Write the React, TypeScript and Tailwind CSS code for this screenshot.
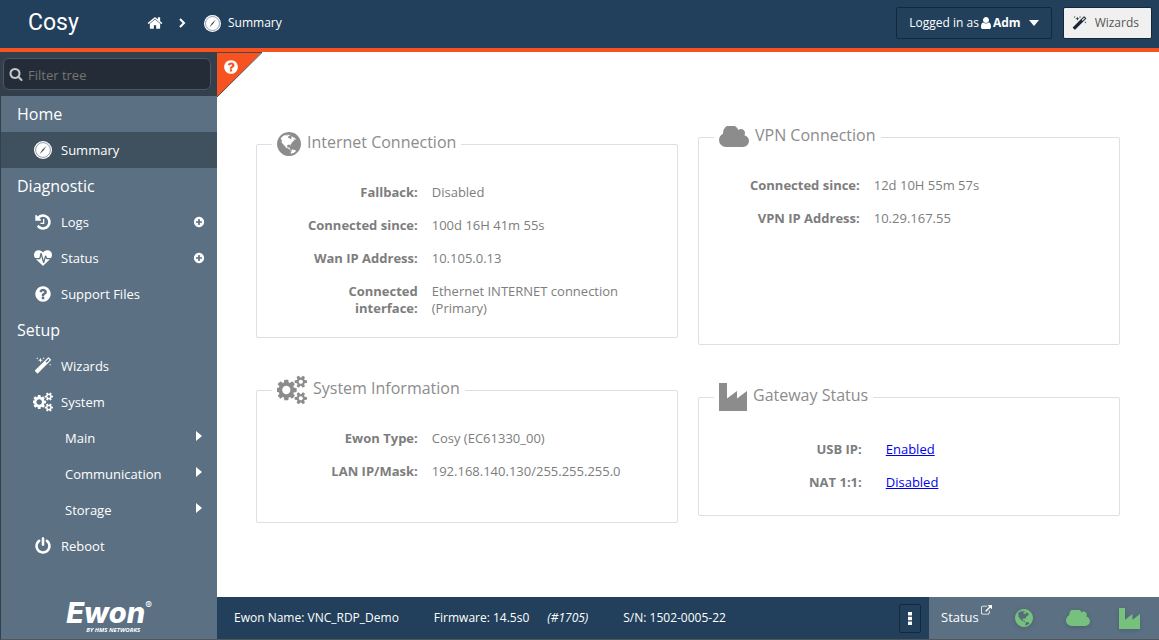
import type { ReactNode } from 'react';

type IconProps = { className?: string };

const paths = {
  home: 'M1472 992v480q0 26-19 45t-45 19h-384v-384h-256v384h-384q-26 0-45-19t-19-45v-480q0-1 .5-3t.5-3l575-474 575 474q1 2 1 6zm223-69l-62 74q-8 9-21 11h-3q-13 0-21-7l-692-577-692 577q-12 8-24 7-13-2-21-11l-62-74q-8-10-7-23.5t11-21.5l719-599q32-26 76-26t76 26l244 204v-195q0-14 9-23t23-9h192q14 0 23 9t9 23v408l219 182q10 8 11 21.5t-7 23.5z',
  search:
    'M1216 832q0-185-131.5-316.5t-316.5-131.5-316.5 131.5-131.5 316.5 131.5 316.5 316.5 131.5 316.5-131.5 131.5-316.5zm512 832q0 52-38 90t-90 38q-54 0-90-38l-343-342q-179 124-399 124-143 0-273.5-55.5t-225-150-150-225-55.5-273.5 55.5-273.5 150-225 225-150 273.5-55.5 273.5 55.5 225 150 150 225 55.5 273.5q0 220-124 399l343 343q37 37 37 90z',
  help: 'M1024 1376v-192q0-14-9-23t-23-9h-192q-14 0-23 9t-9 23v192q0 14 9 23t23 9h192q14 0 23-9t9-23zm256-672q0-88-55.5-163t-138.5-116-170-41q-243 0-371 213-15 24 8 42l132 100q7 6 19 6 16 0 25-12 53-68 86-92 34-24 86-24 48 0 85.5 26t37.5 59q0 38-20 61t-68 45q-63 28-115.5 86.5t-52.5 125.5v36q0 14 9 23t23 9h192q14 0 23-9t9-23q0-19 21.5-49.5t54.5-49.5q32-18 49-28.5t46-35 44.5-48 28-60.5 12.5-81zm384 192q0 209-103 385.5t-279.5 279.5-385.5 103-385.5-103-279.5-279.5-103-385.5 103-385.5 279.5-279.5 385.5-103 385.5 103 279.5 279.5 103 385.5z',
  history:
    'M1664 896q0 156-61 298t-164 245-245 164-298 61q-172 0-327-72.5t-264-204.5q-7-10-6.5-22.5t8.5-20.5l137-138q10-9 25-9 16 2 23 12 73 95 179 147t225 52q104 0 198.5-40.5t163.5-109.5 109.5-163.5 40.5-198.5-40.5-198.5-109.5-163.5-163.5-109.5-198.5-40.5q-98 0-188 35.5t-160 101.5l137 138q31 30 14 69-17 40-59 40h-448q-26 0-45-19t-19-45v-448q0-42 40-59 39-17 69 14l130 129q107-101 244.5-156.5t284.5-55.5q156 0 298 61t245 164 164 245 61 298zm-640-288v448q0 14-9 23t-23 9h-320q-14 0-23-9t-9-23v-64q0-14 9-23t23-9h224v-352q0-14 9-23t23-9h64q14 0 23 9t9 23z',
  heartbeat:
    'M1280 1024h305q-5 6-10 10.5t-9 7.5l-3 4-623 600q-18 18-44 18t-44-18l-624-602q-5-2-21-20h369q22 0 39.5-13.5t22.5-34.5l70-281 190 667q6 20 23 33t39 13q21 0 38-13t23-33l146-485 56 112q18 35 57 35zm512-428q0 145-103 300h-369l-111-221q-8-17-25.5-27t-36.5-8q-45 5-56 46l-129 430-196-686q-6-20-23.5-33t-39.5-13-39 13.5-22 34.5l-116 464h-423q-103-155-103-300 0-220 127-344t351-124q62 0 126.5 21.5t120 58 95.5 68.5 76 68q36-36 76-68t95.5-68.5 120-58 126.5-21.5q224 0 351 124t127 344z',
  magic:
    'M1254 581l293-293-107-107-293 293zm447-293q0 27-18 45l-1286 1286q-18 18-45 18t-45-18l-198-198q-18-18-18-45t18-45l1286-1286q18-18 45-18t45 18l198 198q18 18 18 45zm-1351-190l98 30-98 30-30 98-30-98-98-30 98-30 30-98zm350 162l196 60-196 60-60 196-60-196-196-60 196-60 60-196zm930 478l98 30-98 30-30 98-30-98-98-30 98-30 30-98zm-640-640l98 30-98 30-30 98-30-98-98-30 98-30 30-98z',
  power:
    'M1664 896q0 156-61 298t-164 245-245 164-298 61-298-61-245-164-164-245-61-298q0-182 80.5-343t226.5-270q43-32 95.5-25t83.5 50q32 42 24.5 94.5t-49.5 84.5q-98 74-151.5 181t-53.5 228q0 104 40.5 198.5t109.5 163.5 163.5 109.5 198.5 40.5 198.5-40.5 163.5-109.5 109.5-163.5 40.5-198.5q0-121-53.5-228t-151.5-181q-42-32-49.5-84.5t24.5-94.5q31-43 84-50t95 25q146 109 226.5 270t80.5 343zm-640-768v640q0 52-38 90t-90 38-90-38-38-90v-640q0-52 38-90t90-38 90 38 38 90z',
  user: 'M1536 1399q0 109-62.5 187t-150.5 78h-854q-88 0-150.5-78t-62.5-187q0-85 8.5-160.5t31.5-152 58.5-131 94-89 134.5-34.5q131 128 313 128t313-128q76 0 134.5 34.5t94 89 58.5 131 31.5 152 8.5 160.5zm-256-887q0 159-112.5 271.5t-271.5 112.5-271.5-112.5-112.5-271.5 112.5-271.5 271.5-112.5 271.5 112.5 112.5 271.5z',
  plus: 'M1344 960v-128q0-26-19-45t-45-19h-256v-256q0-26-19-45t-45-19h-128q-26 0-45 19t-19 45v256h-256q-26 0-45 19t-19 45v128q0 26 19 45t45 19h256v256q0 26 19 45t45 19h128q26 0 45-19t19-45v-256h256q26 0 45-19t19-45zm320-64q0 209-103 385.5t-279.5 279.5-385.5 103-385.5-103-279.5-279.5-103-385.5 103-385.5 279.5-279.5 385.5-103 385.5 103 279.5 279.5 103 385.5z',
  external:
    'M1408 928v320q0 119-84.5 203.5t-203.5 84.5h-832q-119 0-203.5-84.5t-84.5-203.5v-832q0-119 84.5-203.5t203.5-84.5h704q14 0 23 9t9 23v64q0 14-9 23t-23 9h-704q-66 0-113 47t-47 113v832q0 66 47 113t113 47h832q66 0 113-47t47-113v-320q0-14 9-23t23-9h64q14 0 23 9t9 23zm384-864v512q0 26-19 45t-45 19-45-19l-176-176-652 652q-10 10-23 10t-23-10l-114-114q-10-10-10-23t10-23l652-652-176-176q-19-19-19-45t19-45 45-19h512q26 0 45 19t19 45z',
  cogs: 'M832 896q0-106-75-181t-181-75-181 75-75 181 75 181 181 75 181-75 75-181zm768 512q0-52-38-90t-90-38-90 38-38 90q0 53 37.5 90.5t90.5 37.5 90.5-37.5 37.5-90.5zm0-1024q0-52-38-90t-90-38-90 38-38 90q0 53 37.5 90.5t90.5 37.5 90.5-37.5 37.5-90.5zm-384 421v185q0 10-7 19.5t-16 10.5l-155 24q-11 35-32 76 34 48 90 115 7 11 7 20 0 12-7 19-23 30-82.5 89.5t-78.5 59.5q-11 0-21-7l-115-90q-37 19-77 31-11 108-23 155-7 24-30 24h-186q-11 0-20-7.5t-10-17.5l-23-153q-34-10-75-31l-118 89q-7 7-20 7-11 0-21-8-144-133-144-160 0-9 7-19 10-14 41-53t47-61q-23-44-35-82l-152-24q-10-1-17-9.5t-7-19.5v-185q0-10 7-19.5t16-10.5l155-24q11-35 32-76-34-48-90-115-7-11-7-20 0-12 7-20 22-30 82-89t79-59q11 0 21 7l115 90q34-18 77-32 11-108 23-154 7-24 30-24h186q11 0 20 7.5t10 17.5l23 153q34 10 75 31l118-89q8-7 20-7 11 0 21 8 144 133 144 160 0 8-7 19-12 16-42 54t-45 60q23 48 34 82l152 23q10 2 17 10.5t7 19.5zm640 533v140q0 16-149 31-12 27-30 52 51 113 51 138 0 4-4 7-122 71-124 71-8 0-46-47t-52-68q-20 2-30 2t-30-2q-14 21-52 68t-46 47q-2 0-124-71-4-3-4-7 0-25 51-138-18-25-30-52-149-15-149-31v-140q0-16 149-31 13-29 30-52-51-113-51-138 0-4 4-7 4-2 35-20t59-34 30-16q8 0 46 46.5t52 67.5q20-2 30-2t30 2q51-71 92-112l6-2q4 0 124 70 4 3 4 7 0 25-51 138 17 23 30 52 149 15 149 31zm0-1024v140q0 16-149 31-12 27-30 52 51 113 51 138 0 4-4 7-122 71-124 71-8 0-46-47t-52-68q-20 2-30 2t-30-2q-14 21-52 68t-46 47q-2 0-124-71-4-3-4-7 0-25 51-138-18-25-30-52-149-15-149-31v-140q0-16 149-31 13-29 30-52-51-113-51-138 0-4 4-7 4-2 35-20t59-34 30-16q8 0 46 46.5t52 67.5q20-2 30-2t30 2q51-71 92-112l6-2q4 0 124 70 4 3 4 7 0 25-51 138 17 23 30 52 149 15 149 31z',
  cloud:
    'M1920 1152q0 159-112.5 271.5t-271.5 112.5h-1088q-185 0-316.5-131.5t-131.5-316.5q0-132 71-241.5t187-163.5q-2-28-2-43 0-212 150-362t362-150q158 0 286.5 88t187.5 230q70-62 166-62 106 0 181 75t75 181q0 75-41 138 129 30 213 134.5t84 239.5z',
  globe:
    'M896 128q209 0 385.5 103t279.5 279.5 103 385.5-103 385.5-279.5 279.5-385.5 103-385.5-103-279.5-279.5-103-385.5 103-385.5 279.5-279.5 385.5-103zm274 521q-2 1-9.5 9.5t-13.5 9.5q2 0 4.5-5t5-11 3.5-7q6-7 22-15 14-6 52-12 34-8 51 11-2-2 9.5-13t14.5-12q3-2 15-4.5t15-7.5l2-22q-12 1-17.5-7t-6.5-21q0 2-6 8 0-7-4.5-8t-11.5 1-9 1q-10-3-15-7.5t-8-16.5-4-15q-2-5-9.5-11t-9.5-10q-1-2-2.5-5.5t-3-6.5-4-5.5-5.5-2.5-7 5-7.5 10-4.5 5q-3-2-6-1.5t-4.5 1-4.5 3-5 3.5q-3 2-8.5 3t-8.5 2q15-5-1-11-10-4-16-3 9-4 7.5-12t-8.5-14h5q-1-4-8.5-8.5t-17.5-8.5-13-6q-8-5-34-9.5t-33-.5q-5 6-4.5 10.5t4 14 3.5 12.5q1 6-5.5 13t-6.5 12q0 7 14 15.5t10 21.5q-3 8-16 16t-16 12q-5 8-1.5 18.5t10.5 16.5q2 2 1.5 4t-3.5 4.5-5.5 4-6.5 3.5l-3 2q-11 5-20.5-6t-13.5-26q-7-25-16-30-23-8-29 1-5-13-41-26-25-9-58-4 6-1 0-15-7-15-19-12 3-6 4-17.5t1-13.5q3-13 12-23 1-1 7-8.5t9.5-13.5.5-6q35 4 50-11 5-5 11.5-17t10.5-17q9-6 14-5.5t14.5 5.5 14.5 5q14 1 15.5-11t-7.5-20q12 1 3-17-4-7-8-9-12-4-27 5-8 4 2 8-1-1-9.5 10.5t-16.5 17.5-16-5q-1-1-5.5-13.5t-9.5-13.5q-8 0-16 15 3-8-11-15t-24-8q19-12-8-27-7-4-20.5-5t-19.5 4q-5 7-5.5 11.5t5 8 10.5 5.5 11.5 4 8.5 3q14 10 8 14-2 1-8.5 3.5t-11.5 4.5-6 4q-3 4 0 14t-2 14q-5-5-9-17.5t-7-16.5q7 9-25 6l-10-1q-4 0-16 2t-20.5 1-13.5-8q-4-8 0-20 1-4 4-2-4-3-11-9.5t-10-8.5q-46 15-94 41 6 1 12-1 5-2 13-6.5t10-5.5q34-14 42-7l5-5q14 16 20 25-7-4-30-1-20 6-22 12 7 12 5 18-4-3-11.5-10t-14.5-11-15-5q-16 0-22 1-146 80-235 222 7 7 12 8 4 1 5 9t2.5 11 11.5-3q9 8 3 19 1-1 44 27 19 17 21 21 3 11-10 18-1-2-9-9t-9-4q-3 5 .5 18.5t10.5 12.5q-7 0-9.5 16t-2.5 35.5-1 23.5l2 1q-3 12 5.5 34.5t21.5 19.5q-13 3 20 43 6 8 8 9 3 2 12 7.5t15 10 10 10.5q4 5 10 22.5t14 23.5q-2 6 9.5 20t10.5 23q-1 0-2.5 1t-2.5 1q3 7 15.5 14t15.5 13q1 3 2 10t3 11 8 2q2-20-24-62-15-25-17-29-3-5-5.5-15.5t-4.5-14.5q2 0 6 1.5t8.5 3.5 7.5 4 2 3q-3 7 2 17.5t12 18.5 17 19 12 13q6 6 14 19.5t0 13.5q9 0 20 10.5t17 19.5q5 8 8 26t5 24q2 7 8.5 13.5t12.5 9.5l16 8 13 7q5 2 18.5 10.5t21.5 11.5q10 4 16 4t14.5-2.5 13.5-3.5q15-2 29 15t21 21q36 19 55 11-2 1 .5 7.5t8 15.5 9 14.5 5.5 8.5q5 6 18 15t18 15q6-4 7-9-3 8 7 20t18 10q14-3 14-32-31 15-49-18 0-1-2.5-5.5t-4-8.5-2.5-8.5 0-7.5 5-3q9 0 10-3.5t-2-12.5-4-13q-1-8-11-20t-12-15q-5 9-16 8t-16-9q0 1-1.5 5.5t-1.5 6.5q-13 0-15-1 1-3 2.5-17.5t3.5-22.5q1-4 5.5-12t7.5-14.5 4-12.5-4.5-9.5-17.5-2.5q-19 1-26 20-1 3-3 10.5t-5 11.5-9 7q-7 3-24 2t-24-5q-13-8-22.5-29t-9.5-37q0-10 2.5-26.5t3-25-5.5-24.5q3-2 9-9.5t10-10.5q2-1 4.5-1.5t4.5 0 4-1.5 3-6q-1-1-4-3-3-3-4-3 7 3 28.5-1.5t27.5 1.5q15 11 22-2 0-1-2.5-9.5t-.5-13.5q5 27 29 9 3 3 15.5 5t17.5 5q3 2 7 5.5t5.5 4.5 5-.5 8.5-6.5q10 14 12 24 11 40 19 44 7 3 11 2t4.5-9.5 0-14-1.5-12.5l-1-8v-18l-1-8q-15-3-18.5-12t1.5-18.5 15-18.5q1-1 8-3.5t15.5-6.5 12.5-8q21-19 15-35 7 0 11-9-1 0-5-3t-7.5-5-4.5-2q9-5 2-16 5-3 7.5-11t7.5-10q9 12 21 2 8-8 1-16 5-7 20.5-10.5t18.5-9.5q7 2 8-2t1-12 3-12q4-5 15-9t13-5l17-11q3-4 0-4 18 2 31-11 10-11-6-20 3-6-3-9.5t-15-5.5q3-1 11.5-.5t10.5-1.5q15-10-7-16-17-5-43 12zm-163 877q206-36 351-189-3-3-12.5-4.5t-12.5-3.5q-18-7-24-8 1-7-2.5-13t-8-9-12.5-8-11-7q-2-2-7-6t-7-5.5-7.5-4.5-8.5-2-10 1l-3 1q-3 1-5.5 2.5t-5.5 3-4 3 0 2.5q-21-17-36-22-5-1-11-5.5t-10.5-7-10-1.5-11.5 7q-5 5-6 15t-2 13q-7-5 0-17.5t2-18.5q-3-6-10.5-4.5t-12 4.5-11.5 8.5-9 6.5-8.5 5.5-8.5 7.5q-3 4-6 12t-5 11q-2-4-11.5-6.5t-9.5-5.5q2 10 4 35t5 38q7 31-12 48-27 25-29 40-4 22 12 26 0 7-8 20.5t-7 21.5q0 6 2 16z',
};

const Icon = ({ name, className, box = '0 0 1792 1792' }: { name: keyof typeof paths; className?: string; box?: string }) => (
  <svg viewBox={box} className={className} fill="currentColor" aria-hidden="true">
    <path d={paths[name]} />
  </svg>
);

const Compass = ({ className }: IconProps) => (
  <svg viewBox="0 0 18 18" className={className} aria-hidden="true">
    <circle cx="9" cy="9" r="9" fill="#fff" />
    <circle cx="9" cy="9" r="7.4" fill="none" stroke="#5f7284" strokeWidth="0.7" />
    <path d="M12.6 4.8L9.5 9.5L5.4 13.2L8.5 8.5z" fill="#3f515f" />
  </svg>
);

const Globe = ({ className }: IconProps) => <Icon name="globe" box="128 128 1536 1536" className={className} />;

const Factory = ({ className }: IconProps) => (
  <svg viewBox="0 0 28 28" className={className} fill="currentColor" aria-hidden="true">
    <path d="M0 0h8v15.5L18 8v7.5L28 8v20H0z" />
  </svg>
);

const Arrow = () => (
  <svg viewBox="0 0 6 10" className="mb-1 h-2.5 w-1.5" fill="currentColor" aria-hidden="true">
    <path d="M0 0l6 5-6 5z" />
  </svg>
);

const MenuTitle = ({ children }: { children: ReactNode }) => (
  <h2 className="flex h-9 items-center pl-4 text-base">{children}</h2>
);

type MenuItemProps = { icon?: ReactNode; label: string; end?: ReactNode; active?: boolean };

const MenuItem = ({ icon, label, end, active }: MenuItemProps) => (
  <li>
    <a href="#" className={active ? 'flex h-9 items-center bg-[#3f505e] pl-8 pr-3' : 'flex h-9 items-center pl-8 pr-3'}>
      {icon ? <span className="mr-2 flex w-5 justify-center">{icon}</span> : <span className="w-8" />}
      <span className="flex-1 pt-0.5">{label}</span>
      <span className="flex w-3 justify-center">{end}</span>
    </a>
  </li>
);

type Row = { label: string; value: ReactNode };
type PanelProps = { icon: ReactNode; title: string; rows: Row[]; className: string };

const Panel = ({ icon, title, rows, className }: PanelProps) => (
  <fieldset className="min-w-0 rounded-xs border border-[#dcdfe5]">
    <legend className="ml-[15px] px-[5px] text-[#8c8c8c]">
      <span className="flex h-[30px] items-center gap-1.5 text-base">
        {icon}
        <span className="pb-1">{title}</span>
      </span>
    </legend>
    <dl className={`flex flex-col gap-4 ${className}`}>
      {rows.map((row) => (
        <div key={row.label} className="grid grid-cols-[3fr_5fr] gap-x-3.5">
          <dt className="text-right font-bold">{row.label}</dt>
          <dd>{row.value}</dd>
        </div>
      ))}
    </dl>
  </fieldset>
);

const Link = ({ children }: { children: ReactNode }) => (
  <a href="#" className="ml-2.5 text-[#0000ee] underline">
    {children}
  </a>
);

const Header = () => (
  <header className="flex h-[52px] items-center border-b-4 border-[#f65321] bg-[#22405b] pb-0.5 pr-[7px] text-xs text-white">
    <a href="#" className="w-[147px] pl-7 font-[Roboto,sans-serif] text-[23px] leading-7">
      Cosy
    </a>
    <nav className="flex flex-1 items-center">
      <a href="#" aria-label="Home">
        <Icon name="home" className="size-4" />
      </a>
      <svg viewBox="0 0 7 10" className="ml-4 mr-[18px] h-2.5 w-[7px]" fill="none" stroke="currentColor" strokeWidth="2" aria-hidden="true">
        <path d="M1 1l4 4-4 4" />
      </svg>
      <Compass className="mr-[7px] size-[17px]" />
      <span>Summary</span>
    </nav>
    <button className="mr-[11px] flex h-8 items-center rounded-xs border border-[#14283a] px-3">
      Logged in as
      <Icon name="user" box="256 128 1280 1536" className="mx-0.5 h-3 w-2.5" />
      <b>Adm</b>
      <svg viewBox="0 0 10 6" className="ml-2 h-1.5 w-2.5" fill="currentColor" aria-hidden="true">
        <path d="M0 0h10L5 6z" />
      </svg>
    </button>
    <button className="flex h-8 items-center gap-2 rounded-xs border border-[#14283a] bg-[#f0f0f0] pl-2 pr-3 text-[#555]">
      <Icon name="magic" className="size-[15px] text-[#1c2733]" />
      Wizards
    </button>
  </header>
);

const Sidebar = () => (
  <aside className="flex w-[217px] shrink-0 flex-col border-b border-l border-b-[#555] border-l-[#343f4c] bg-[#5b7083] text-[13px] text-white">
    <div className="flex h-11 items-center bg-[#343f4c] pl-0.5 pr-1.5">
      <label className="flex h-8 flex-1 items-center rounded-md border border-[#46586a] bg-[#242d37] pl-[5px]">
        <Icon name="search" className="mr-[5px] size-3.5 shrink-0 text-[#c4c8cc]" />
        <input aria-label="Filter tree" placeholder="Filter tree" className="w-full min-w-0 bg-transparent pt-[3px] outline-none placeholder:text-[#757575]" />
      </label>
    </div>
    <nav className="flex-1">
      <MenuTitle>Home</MenuTitle>
      <ul>
        <MenuItem active icon={<Compass className="size-[18px]" />} label="Summary" />
      </ul>
      <MenuTitle>Diagnostic</MenuTitle>
      <ul>
        <MenuItem icon={<Icon name="history" className="size-[18px]" />} label="Logs" end={<Icon name="plus" className="size-3" />} />
        <MenuItem icon={<Icon name="heartbeat" className="size-[18px]" />} label="Status" end={<Icon name="plus" className="size-3" />} />
        <MenuItem icon={<Icon name="help" className="size-[18px]" />} label="Support Files" />
      </ul>
      <MenuTitle>Setup</MenuTitle>
      <ul>
        <MenuItem icon={<Icon name="magic" className="size-[18px]" />} label="Wizards" />
        <MenuItem icon={<Icon name="cogs" box="0 0 1856 1792" className="h-5 w-5" />} label="System" />
        <MenuItem label="Main" end={<Arrow />} />
        <MenuItem label="Communication" end={<Arrow />} />
        <MenuItem label="Storage" end={<Arrow />} />
        <MenuItem icon={<Icon name="power" className="size-[18px]" />} label="Reboot" />
      </ul>
    </nav>
    <div className="flex justify-center pb-1.5">
      <div>
        <div className="flex font-[Inter,sans-serif] text-[29px] font-extrabold italic leading-7">
          Ewon<sup className="top-0 text-[10px] font-normal not-italic leading-3">®</sup>
        </div>
        <div className="pl-5 text-[6px] font-bold italic leading-[6px]">BY HMS NETWORKS</div>
      </div>
    </div>
  </aside>
);

const Footer = () => (
  <footer className="flex h-[43px] border-b border-[#555] bg-[#22405b] text-xs text-white">
    <div className="flex flex-1 items-center pl-[17px]">
      <span>Ewon Name: VNC_RDP_Demo</span>
      <span className="ml-[35px]">Firmware: 14.5s0</span>
      <i className="ml-[18px]">(#1705)</i>
      <span className="ml-[35px]">S/N: 1502-0005-22</span>
    </div>
    <button aria-label="More" className="mr-2 flex h-[29px] w-[22px] items-center justify-center self-center rounded-xs border border-[#14283a]">
      <svg viewBox="0 0 4 13" className="h-[13px] w-1" fill="currentColor" aria-hidden="true">
        <path d="M0 0h4v3.4H0zM0 4.8h4v3.4H0zM0 9.6h4V13H0z" />
      </svg>
    </button>
    <div className="flex w-[230px] items-center bg-[#5b7083] pl-3 pr-[19px]">
      <a href="#" className="flex items-center text-[13px]">
        Status
        <Icon name="external" className="mb-4 ml-0.5 size-[11px]" />
      </a>
      <div className="flex flex-1 items-center justify-between pl-[23px] text-[#77c17e]">
        <Globe className="size-[18px] drop-shadow-sm" />
        <Icon name="cloud" box="0 256 1920 1280" className="ml-1 h-4 w-6 drop-shadow-sm" />
        <Factory className="size-[21px] drop-shadow-sm" />
      </div>
    </div>
  </footer>
);

const App = () => {
  return (
    <div className="flex min-h-screen flex-col bg-white font-['Open_Sans',sans-serif]">
      <Header />
      <div className="flex flex-1">
        <Sidebar />
        <div className="flex min-w-0 flex-1 flex-col">
          <main className="relative flex-1 px-[39px] text-[13px] leading-[17px] text-[#7d7d7d]">
            <button aria-label="Help" className="absolute left-0 top-0">
              <svg viewBox="0 0 46 46" className="size-[46px]" aria-hidden="true">
                <path d="M0 0h45L0 45z" fill="#f65321" />
                <path d="M0 .5h45L0 45" fill="none" stroke="#4a4a4a" strokeWidth="1" />
              </svg>
              <Icon name="help" className="absolute left-1.5 top-[7px] size-4 text-white" />
            </button>
            <div className="grid grid-cols-2 gap-5">
              <div className="pt-[77px]">
                <Panel
                  className="pb-5 pl-10 pr-11 pt-[25px]"
                  icon={<Globe className="size-6" />}
                  title="Internet Connection"
                  rows={[
                    { label: 'Fallback:', value: 'Disabled' },
                    { label: 'Connected since:', value: '100d 16H 41m 55s' },
                    { label: 'Wan IP Address:', value: '10.105.0.13' },
                    { label: 'Connected interface:', value: 'Ethernet INTERNET connection (Primary)' },
                  ]}
                />
                <div className="pt-[37px]">
                  <Panel
                    className="pb-[42px] pl-10 pr-11 pt-[25px]"
                    icon={<Icon name="cogs" box="0 0 1856 1792" className="h-[30px] w-[30px]" />}
                    title="System Information"
                    rows={[
                      { label: 'Ewon Type:', value: 'Cosy (EC61330_00)' },
                      { label: 'LAN IP/Mask:', value: '192.168.140.130/255.255.255.0' },
                    ]}
                  />
                </div>
              </div>
              <div className="pt-[70px]">
                <Panel
                  className="pb-[117px] pl-10 pr-11 pt-[25px]"
                  icon={<Icon name="cloud" box="0 256 1920 1280" className="h-[22px] w-[30px]" />}
                  title="VPN Connection"
                  rows={[
                    { label: 'Connected since:', value: '12d 10H 55m 57s' },
                    { label: 'VPN IP Address:', value: '10.29.167.55' },
                  ]}
                />
                <div className="pt-[37px]">
                  <Panel
                    className="px-[42px] pb-6 pt-[29px]"
                    icon={<Factory className="size-7" />}
                    title="Gateway Status"
                    rows={[
                      { label: 'USB IP:', value: <Link>Enabled</Link> },
                      { label: 'NAT 1:1:', value: <Link>Disabled</Link> },
                    ]}
                  />
                </div>
              </div>
            </div>
          </main>
          <Footer />
        </div>
      </div>
    </div>
  );
};

export default App;
